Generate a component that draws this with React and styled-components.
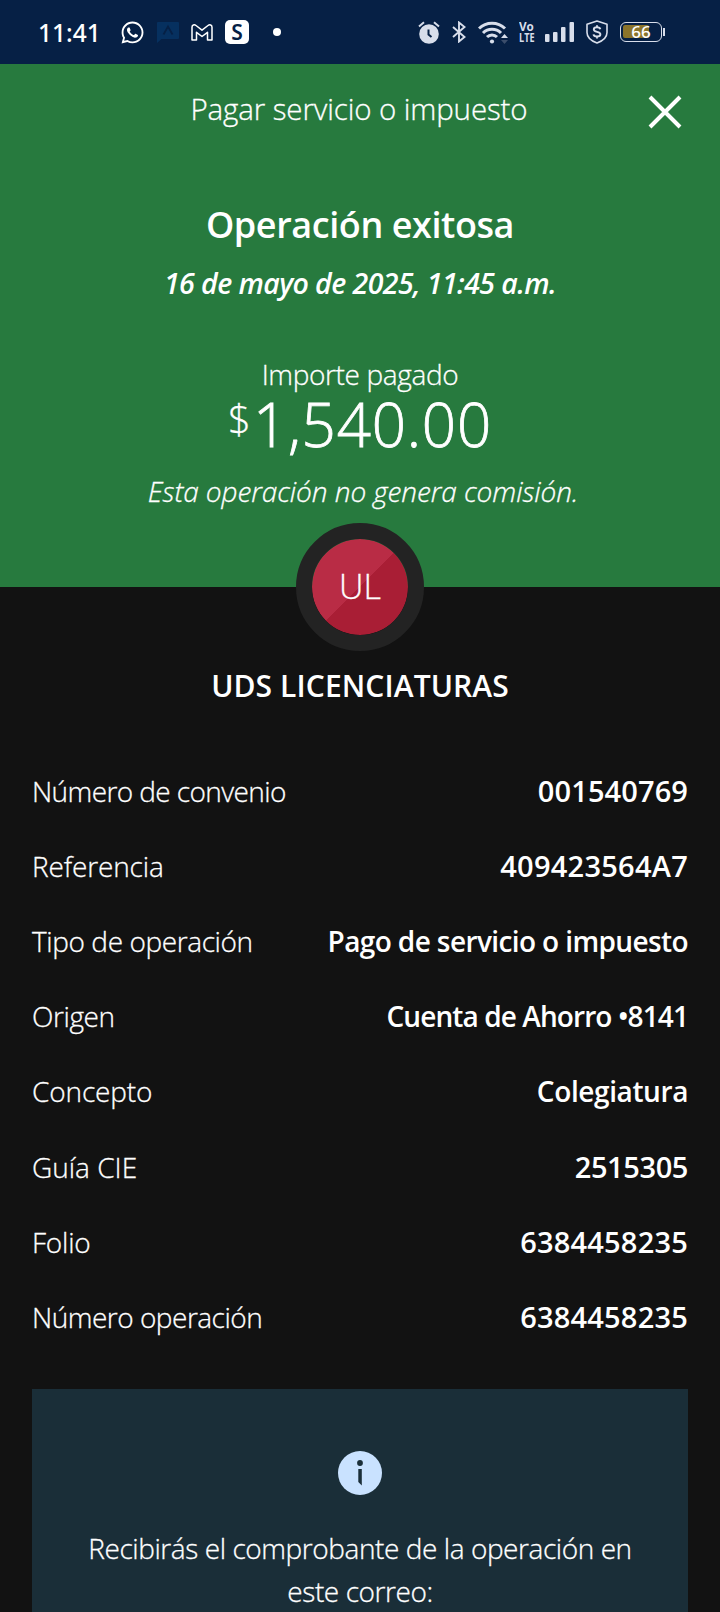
import React from "react";
import styled, { createGlobalStyle } from "styled-components";
import { FaWhatsapp } from "react-icons/fa";

const GlobalStyle = createGlobalStyle`
  * { box-sizing: border-box; }
  body { margin: 0; background: #121212; }
`;

const Screen = styled.div`
  width: 720px;
  height: 1612px;
  overflow: hidden;
  background: #121212;
  color: #fff;
  font-family: "Open Sans", "Noto Sans", sans-serif;
  font-weight: 300;
  -webkit-text-stroke: 0.3px currentColor;
  white-space: nowrap;
`;

const StatusBar = styled.header`
  height: 64px;
  padding: 0 55px 0 38px;
  display: flex;
  align-items: center;
  justify-content: space-between;
  background: #062045;
  -webkit-text-stroke: 0;
`;

const StatusGroup = styled.div`
  display: flex;
  align-items: center;
  color: ${(p) => (p.$soft ? "#d8deeb" : "#fff")};
  svg { display: block; flex: none; }
`;

const Spacer = styled.span`
  width: ${(p) => p.$w}px;
  flex: none;
`;

const Clock = styled.time`
  width: 61px;
  font: 500 24.5px/30px "Noto Sans", sans-serif;
  margin-top: 1px;
`;

const AppTile = styled.span`
  width: 24px;
  height: 24px;
  border-radius: 5px;
  background: #fff;
  color: #062045;
  font: 600 21px/24px "Noto Sans", sans-serif;
  text-align: center;
`;

const NotificationDot = styled.span`
  width: 8px;
  height: 8px;
  border-radius: 50%;
  background: #fff;
`;

const Volte = styled.span`
  display: flex;
  flex-direction: column;
  width: 15px;
  font: 700 13px/11px "Open Sans", sans-serif;
`;

const VolteLine = styled.span`
  transform: scaleX(${(p) => p.$squeeze});
  transform-origin: left;
`;

const Battery = styled.span`
  width: 42px;
  height: 20px;
  padding: 2px;
  border: 1.5px solid #d8deeb;
  border-radius: 6px;
  position: relative;
`;

const BatteryLevel = styled.span`
  display: block;
  width: 26px;
  height: 13px;
  border-radius: 2px;
  background: #8b742b;
`;

const BatteryText = styled.span`
  position: absolute;
  inset: 0;
  color: #fff;
  font: 500 17px/18px "Noto Sans", sans-serif;
  text-align: center;
`;

const BatteryTip = styled.span`
  width: 2px;
  height: 8px;
  margin-left: 1px;
  background: #d8deeb;
`;

const Hero = styled.section`
  height: 523px;
  background: #277a3e;
  display: flex;
  flex-direction: column;
  align-items: center;
`;

const TitleBar = styled.div`
  width: 100%;
  height: 89px;
  padding: 0 38px;
  display: grid;
  grid-template-columns: 34px 1fr 34px;
  align-items: center;
`;

const Title = styled.h1`
  grid-column: 2;
  margin: 0;
  padding-right: 2px;
  font-size: 29.5px;
  font-weight: 300;
  letter-spacing: -0.12px;
  text-align: center;
`;

const CloseButton = styled.button`
  width: 34px;
  height: 34px;
  margin-top: 7px;
  padding: 0;
  border: 0;
  background: none;
  color: #fff;
  svg { display: block; }
`;

const Result = styled.h2`
  margin: 47px 0 0;
  font-size: 36px;
  font-weight: 600;
  line-height: 50px;
  letter-spacing: -0.42px;
  -webkit-text-stroke: 0;
`;

const Timestamp = styled.p`
  margin: 13px 0 0;
  font-size: 28.5px;
  font-weight: 600;
  font-style: italic;
  line-height: 40px;
  letter-spacing: -0.58px;
  -webkit-text-stroke: 0;
`;

const AmountLabel = styled.p`
  margin: 54px 0 0;
  font-size: 28px;
  line-height: 35px;
  letter-spacing: -0.36px;
`;

const Amount = styled.div`
  height: 64px;
  display: flex;
  gap: 2px;
  font-size: 60px;
  line-height: 64px;
  letter-spacing: 0.8px;
  -webkit-text-stroke-width: 0.8px;
`;

const Currency = styled.span`
  margin-top: 7px;
  font-size: 40px;
  line-height: 40px;
  letter-spacing: 0;
  -webkit-text-stroke-width: 0.3px;
`;

const FeeNote = styled.p`
  margin: 15px 0 0;
  padding-left: 6px;
  font-size: 28px;
  font-style: italic;
  line-height: 40px;
  letter-spacing: -0.08px;
`;

const Receipt = styled.main`
  display: flex;
  flex-direction: column;
  align-items: center;
`;

const Avatar = styled.div`
  width: 128px;
  height: 128px;
  margin-top: -64px;
  border: 16px solid #232323;
  border-radius: 50%;
  background: linear-gradient(135deg, #b92c45 50%, #a91e35 50%) padding-box;
  font-size: 34px;
  line-height: 94px;
  text-align: center;
  z-index: 1;
`;

const Payee = styled.h3`
  margin: 15px 0 47px;
  font-size: 30px;
  font-weight: 600;
  line-height: 40px;
  letter-spacing: 0.1px;
  -webkit-text-stroke: 0;
`;

const Details = styled.dl`
  width: 100%;
  margin: 0;
  padding: 0 32px;
`;

const DetailRow = styled.div`
  height: 75.2px;
  display: flex;
  align-items: center;
  justify-content: space-between;
`;

const Label = styled.dt`
  font-size: 28px;
  line-height: 40px;
  letter-spacing: ${(p) => p.$track}px;
`;

const Value = styled.dd`
  margin: 0;
  font-size: ${(p) => (p.$numeric ? 29 : 28)}px;
  font-weight: 600;
  line-height: 40px;
  letter-spacing: ${(p) => p.$track}px;
  -webkit-text-stroke: 0;
`;

const Notice = styled.aside`
  width: 656px;
  height: 260px;
  margin-top: 34px;
  padding-top: 62px;
  display: flex;
  flex-direction: column;
  align-items: center;
  background: #1a2e38;
`;

const NoticeText = styled.p`
  margin: 32.5px 0 0;
  font-size: 28px;
  line-height: 42.7px;
  letter-spacing: -0.43px;
  text-align: center;
`;

const details = [
  { label: "Número de convenio", lt: -0.6, value: "001540769", vt: 0.1, numeric: true },
  { label: "Referencia", lt: -0.15, value: "409423564A7", vt: 0.25, numeric: true },
  { label: "Tipo de operación", lt: -0.4, value: "Pago de servicio o impuesto", vt: -0.61 },
  { label: "Origen", lt: -0.4, value: "Cuenta de Ahorro •8141", vt: -0.9 },
  { label: "Concepto", lt: -0.15, value: "Colegiatura", vt: -0.4 },
  { label: "Guía CIE", lt: 0, value: "2515305", vt: -0.4, numeric: true },
  { label: "Folio", lt: -0.2, value: "6384458235", vt: 0.2, numeric: true },
  { label: "Número operación", lt: -0.5, value: "6384458235", vt: 0.2, numeric: true },
];

const ChatIcon = () => (
  <svg width="22" height="21" viewBox="0 0 22 21">
    <path d="M1 0h20a1 1 0 0 1 1 1v15a1 1 0 0 1-1 1H4.500L0 21V1a1 1 0 0 1 1-1z" fill="#06305f" />
    <path d="M6.500 12.500 11 4.500l4.500 8" fill="none" stroke="#062045" strokeWidth="1.800" />
  </svg>
);

const MailIcon = () => (
  <svg width="22" height="17" viewBox="0 0 22 17" fill="none" stroke="currentColor" strokeWidth="1.500" strokeLinejoin="round">
    <path d="M1 3.200C1 1 3.300.2 5 1.500l6 4.700 6-4.700c1.700-1.300 4-.5 4 1.700V16h-4.500V8.300L11 12.500 5.500 8.300V16H1z" />
  </svg>
);

const AlarmIcon = () => (
  <svg width="22" height="23" viewBox="0 0 22 23">
    <circle cx="11" cy="13" r="9.800" fill="currentColor" />
    <path d="M1 5.500 6 1.300M16 1.300l5 4.200" stroke="currentColor" strokeWidth="2" />
    <path d="M10.500 8.500v5l3 2.500" fill="none" stroke="#062045" strokeWidth="2" />
  </svg>
);

const BluetoothIcon = () => (
  <svg width="14" height="22" viewBox="0 0 14 22" fill="none" stroke="currentColor" strokeWidth="1.900">
    <path d="M1 6l11.500 10L7 20.500v-19L12.500 6 1 16" />
  </svg>
);

const WifiIcon = () => (
  <svg width="30" height="23" viewBox="0 0 30 23">
    <g fill="none" stroke="currentColor" strokeWidth="3">
      <path d="M1 7.500a18.500 18.500 0 0 1 26 0" />
      <path d="M5 12a12.700 12.700 0 0 1 18 0" />
      <path d="M9 16a7 7 0 0 1 10 0" />
    </g>
    <circle cx="14" cy="20.500" r="2.100" fill="currentColor" />
    <path d="M23 17l3.500-4 3.500 4z" fill="currentColor" />
    <path d="M23 19h7l-3.500 4z" fill="#3b4d6b" />
  </svg>
);

const SignalIcon = () => (
  <svg width="29" height="20" viewBox="0 0 29 20" fill="currentColor">
    <rect x="0" y="12" width="4.500" height="8" rx="1" />
    <rect x="8" y="10" width="4.500" height="10" rx="1" />
    <rect x="16" y="5" width="4.500" height="15" rx="1" />
    <rect x="24.500" y="0" width="4.500" height="20" rx="1" />
  </svg>
);

const ShieldIcon = () => (
  <svg width="22" height="24" viewBox="0 0 22 24" fill="none" stroke="currentColor">
    <path d="M11 1 21 4.300v8.200c0 5-4.500 8.500-10 10.500C5.500 21 1 17.500 1 12.500V4.300z" strokeWidth="1.600" strokeLinejoin="round" />
    <path d="M14.300 9.200C14 7.800 12.700 7.300 11 7.300c-1.900 0-3.200.8-3.200 2.200 0 3.200 6.600 1.400 6.600 4.700 0 1.500-1.500 2.300-3.400 2.300-1.900 0-3.300-.7-3.500-2.200M11 5.300v2M11 16.500v2" strokeWidth="1.900" />
  </svg>
);

const CloseIcon = () => (
  <svg width="34" height="34" viewBox="0 0 34 34" fill="none" stroke="currentColor" strokeWidth="4">
    <path d="M2 2l30 30M32 2 2 32" />
  </svg>
);

const InfoIcon = () => (
  <svg width="44" height="44" viewBox="0 0 44 44">
    <circle cx="22" cy="22" r="22" fill="#c9e2ff" />
    <circle cx="22" cy="12" r="2.900" fill="#1a2e38" />
    <path d="M20.300 18h3.500v16.500L20.300 31z" fill="#1a2e38" />
  </svg>
);

export default function App() {
  return (
    <Screen>
      <GlobalStyle />
      <StatusBar>
        <StatusGroup>
          <Clock>11:41</Clock>
          <Spacer $w={21} />
          <FaWhatsapp size={25} />
          <Spacer $w={12} />
          <ChatIcon />
          <Spacer $w={12} />
          <MailIcon />
          <Spacer $w={12} />
          <AppTile>S</AppTile>
          <Spacer $w={24} />
          <NotificationDot />
        </StatusGroup>
        <StatusGroup $soft>
          <AlarmIcon />
          <Spacer $w={12} />
          <BluetoothIcon />
          <Spacer $w={12} />
          <WifiIcon />
          <Spacer $w={11} />
          <Volte>
            <VolteLine $squeeze={0.9}>Vo</VolteLine>
            <VolteLine $squeeze={0.7}>LTE</VolteLine>
          </Volte>
          <Spacer $w={11} />
          <SignalIcon />
          <Spacer $w={12} />
          <ShieldIcon />
          <Spacer $w={12} />
          <Battery>
            <BatteryLevel />
            <BatteryText>66</BatteryText>
          </Battery>
          <BatteryTip />
        </StatusGroup>
      </StatusBar>

      <Hero>
        <TitleBar>
          <Title>Pagar servicio o impuesto</Title>
          <CloseButton aria-label="Cerrar">
            <CloseIcon />
          </CloseButton>
        </TitleBar>
        <Result>Operación exitosa</Result>
        <Timestamp>16 de mayo de 2025, 11:45 a.m.</Timestamp>
        <AmountLabel>Importe pagado</AmountLabel>
        <Amount>
          <Currency>$</Currency>
          <span>1,540.00</span>
        </Amount>
        <FeeNote>Esta operación no genera comisión.</FeeNote>
      </Hero>

      <Receipt>
        <Avatar>UL</Avatar>
        <Payee>UDS LICENCIATURAS</Payee>
        <Details>
          {details.map((d) => (
            <DetailRow key={d.label}>
              <Label $track={d.lt}>{d.label}</Label>
              <Value $track={d.vt} $numeric={d.numeric}>{d.value}</Value>
            </DetailRow>
          ))}
        </Details>
        <Notice>
          <InfoIcon />
          <NoticeText>
            Recibirás el comprobante de la operación en
            <br />
            este correo:
          </NoticeText>
        </Notice>
      </Receipt>
    </Screen>
  );
}
